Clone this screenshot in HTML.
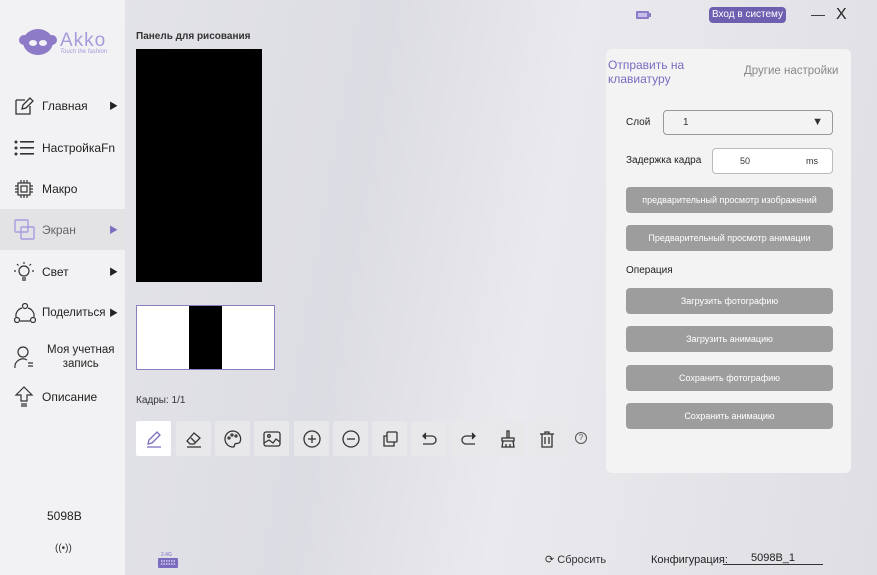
<!DOCTYPE html>
<html><head><meta charset="utf-8"><style>
*{margin:0;padding:0;box-sizing:border-box}
body{width:877px;height:575px;overflow:hidden;font-family:"Liberation Sans","Noto Sans CJK SC",sans-serif;position:relative;background:linear-gradient(100deg,#e6e6ec 0%,#dcdce3 40%,#e9e9ee 60%,#dedee4 100%);color:#333}
.side{position:absolute;left:0;top:0;width:125px;height:575px;background:#f2f2f4}
.nav{position:absolute;left:0;width:125px;height:41px;display:flex;align-items:center;font-size:12px;color:#222}
.nav svg{position:absolute;left:14px}
.nav .t{position:absolute;left:42px}
.nav .a{position:absolute;left:109px;font-size:9px}
.abs{position:absolute}
.tb{position:absolute;top:421px;width:35px;height:35px;background:#e8e8ea;border-radius:2px;display:flex;align-items:center;justify-content:center}
.panel{position:absolute;left:606px;top:49px;width:245px;height:424px;background:#f3f3f4;border-radius:6px}
.gb{position:absolute;left:20px;width:207px;height:26px;background:#9d9d9d;border-radius:4px;color:#fff;font-size:9px;display:flex;align-items:center;justify-content:center}
</style></head><body>
<div class="side">
 <svg class="abs" style="left:18px;top:28px" width="40" height="30" viewBox="0 0 40 30"><ellipse cx="20" cy="14" rx="15" ry="13" fill="#8d7bc7"/><circle cx="6" cy="12" r="5" fill="#8d7bc7"/><circle cx="34" cy="12" r="5" fill="#8d7bc7"/><ellipse cx="15" cy="15" rx="4" ry="3" fill="#f2f2f4"/><ellipse cx="25" cy="15" rx="4" ry="3" fill="#f2f2f4"/></svg>
 <div class="abs" style="left:60px;top:30px;font-size:19px;color:#a89adb;letter-spacing:1px">Akko</div>
 <div class="abs" style="left:60px;top:49px;font-size:6px;color:#a89adb;font-style:italic">Touch the fashion</div>
 <div class="nav" style="top:85px"><svg width="20" height="20" viewBox="0 0 20 20" fill="none" stroke="#333" stroke-width="1.3"><path d="M2 4h9M2 4v14h14v-8"/><path d="M8 13l1-4 7-7 3 3-7 7z"/></svg><span class="t">Главная</span><span class="a">▶</span></div>
 <div class="nav" style="top:127px"><svg width="20" height="16" viewBox="0 0 20 16" fill="#333"><circle cx="2" cy="2" r="1.5"/><circle cx="2" cy="8" r="1.5"/><circle cx="2" cy="14" r="1.5"/><rect x="6" y="1" width="14" height="1.6"/><rect x="6" y="7" width="14" height="1.6"/><rect x="6" y="13" width="14" height="1.6"/></svg><span class="t">НастройкаFn</span></div>
 <div class="nav" style="top:168px"><svg width="20" height="20" viewBox="0 0 20 20" fill="none" stroke="#333" stroke-width="1.2"><rect x="4" y="4" width="12" height="12"/><rect x="7" y="7" width="6" height="6"/><path d="M7 1v3M10 1v3M13 1v3M7 16v3M10 16v3M13 16v3M1 7h3M1 10h3M1 13h3M16 7h3M16 10h3M16 13h3"/></svg><span class="t">Макро</span></div>
 <div class="nav" style="top:209px;background:#e3e3e6"><svg width="22" height="22" viewBox="0 0 22 22" fill="none" stroke="#a99be0" stroke-width="1.4"><rect x="1" y="1" width="13" height="12" rx="1"/><rect x="7" y="8" width="13" height="12" rx="1"/></svg><span class="t" style="color:#666">Экран</span><span class="a" style="color:#7b6cc0">▶</span></div>
 <div class="nav" style="top:251px"><svg width="20" height="22" viewBox="0 0 20 22" fill="none" stroke="#333" stroke-width="1.2"><circle cx="10" cy="10" r="5"/><path d="M8 17h4M8 19h4M10 1v2M3 3l1.5 1.5M17 3l-1.5 1.5M0 10h2M18 10h2"/></svg><span class="t">Свет</span><span class="a">▶</span></div>
 <div class="nav" style="top:292px"><svg width="22" height="20" viewBox="0 0 22 20" fill="none" stroke="#333" stroke-width="1.2"><circle cx="11" cy="3" r="2.5"/><circle cx="3" cy="17" r="2.5"/><circle cx="19" cy="17" r="2.5"/><path d="M8 5A8 8 0 0 0 2 14M14 5a8 8 0 0 1 6 9M6 18h10"/></svg><span class="t" style="font-size:11.5px">Поделиться</span><span class="a">▶</span></div>
 <div class="nav" style="top:335px;height:44px"><svg width="20" height="24" viewBox="0 0 20 24" fill="none" stroke="#333" stroke-width="1.2"><circle cx="9" cy="7" r="5"/><path d="M1 23a8 8 0 0 1 12-8M14 18h5M14 21h5"/></svg><span class="t" style="left:47px;text-align:center;line-height:14px;font-size:11.5px">Моя учетная<br>запись</span></div>
 <div class="nav" style="top:376px"><svg width="20" height="22" viewBox="0 0 20 22" fill="none" stroke="#333" stroke-width="1.2"><path d="M10 1L2 9h5v6h6V9h5z"/><path d="M7 18h6M7 20h6"/></svg><span class="t">Описание</span></div>
 <div class="abs" style="left:47px;top:509px;font-size:12px;color:#222">5098B</div>
 <div class="abs" style="left:55px;top:543px;font-size:10px;color:#333">((•))</div>
</div>
<div class="abs" style="left:136px;top:31px;font-size:10px;font-weight:bold;color:#333">Панель для рисования</div>
<div class="abs" style="left:136px;top:49px;width:126px;height:233px;background:#000"></div>
<div class="abs" style="left:136px;top:305px;width:139px;height:65px;background:#fff;border:1px solid #8a7ec0"><div style="position:absolute;left:52px;top:0;width:33px;height:63px;background:#000"></div></div>
<div class="abs" style="left:136px;top:395px;font-size:10px;color:#333">Кадры: 1/1</div>
<div class="tb" style="left:136px;background:#fff"><svg width="20" height="20" viewBox="0 0 20 20" fill="none" stroke="#7b6cc0" stroke-width="1.3"><path d="M4 15l1-4 8-8 3 3-8 8zM3 18h14"/></svg></div>
<div class="tb" style="left:176px"><svg width="20" height="20" viewBox="0 0 20 20" fill="none" stroke="#333" stroke-width="1.3"><path d="M3 12l7-8 6 5-6 6H6zM7 9l5 5M3 18h14"/></svg></div>
<div class="tb" style="left:215px"><svg width="20" height="20" viewBox="0 0 20 20" fill="none" stroke="#333" stroke-width="1.3"><path d="M10 2a8 8 0 1 0 0 16c2 0 1-2 2-3s4 0 5-2A8 8 0 0 0 10 2z"/><circle cx="6" cy="9" r="1"/><circle cx="9" cy="6" r="1"/><circle cx="13" cy="7" r="1"/></svg></div>
<div class="tb" style="left:254px"><svg width="20" height="20" viewBox="0 0 20 20" fill="none" stroke="#333" stroke-width="1.3"><rect x="2" y="3" width="16" height="14" rx="2"/><circle cx="7" cy="7" r="1.3"/><path d="M2 14l5-3 4 3 3-4 4 3"/></svg></div>
<div class="tb" style="left:294px"><svg width="20" height="20" viewBox="0 0 20 20" fill="none" stroke="#333" stroke-width="1.3"><circle cx="10" cy="10" r="8"/><path d="M10 6v8M6 10h8"/></svg></div>
<div class="tb" style="left:333px"><svg width="20" height="20" viewBox="0 0 20 20" fill="none" stroke="#333" stroke-width="1.3"><circle cx="10" cy="10" r="8"/><path d="M6 10h8"/></svg></div>
<div class="tb" style="left:372px"><svg width="20" height="20" viewBox="0 0 20 20" fill="none" stroke="#333" stroke-width="1.3"><rect x="7" y="3" width="10" height="10" rx="1"/><path d="M7 7H4v10h10v-4"/></svg></div>
<div class="tb" style="left:411px"><svg width="20" height="20" viewBox="0 0 20 20" fill="none" stroke="#333" stroke-width="1.3"><path d="M5 7h8a4 4 0 0 1 0 8H4"/><path d="M7 4L4 7l3 3" fill="#333"/></svg></div>
<div class="tb" style="left:451px"><svg width="20" height="20" viewBox="0 0 20 20" fill="none" stroke="#333" stroke-width="1.3"><path d="M15 7H7a4 4 0 0 0 0 8h9"/><path d="M13 4l3 3-3 3" fill="#333"/></svg></div>
<div class="tb" style="left:490px"><svg width="20" height="20" viewBox="0 0 20 20" fill="none" stroke="#333" stroke-width="1.3"><path d="M9 2h2v7H9zM4 9h12v3H4zM5 12l-1 6h12l-1-6M8 15v3M12 15v3"/></svg></div>
<div class="tb" style="left:529px"><svg width="20" height="20" viewBox="0 0 20 20" fill="none" stroke="#333" stroke-width="1.3"><path d="M3 5h14M8 5V3h4v2M5 5v13h10V5M8 8v7M12 8v7"/></svg></div>
<div class="abs" style="left:575px;top:432px;width:12px;height:12px;border:1px solid #555;border-radius:50%;font-size:8px;text-align:center;line-height:10px;color:#555">?</div>
<svg class="abs" style="left:157px;top:551px" width="22" height="18" viewBox="0 0 22 18"><text x="4" y="5" font-size="5" fill="#7b6cc0" font-family="Liberation Sans">2.4G</text><rect x="1" y="7" width="20" height="10" rx="1" fill="#7b6cc0"/><path d="M4 10h14M4 13h14" stroke="#fff" stroke-dasharray="1.5 1" stroke-width="1"/></svg>
<div class="abs" style="left:545px;top:553px;font-size:11px;color:#333">⟳ Сбросить</div>
<div class="abs" style="left:651px;top:554px;font-size:11px;color:#222">Конфигурация:</div>
<div class="abs" style="left:723px;top:552px;width:100px;border-bottom:1px solid #333;font-size:11px;color:#222;text-align:center">5098B_1</div>
<svg class="abs" style="left:636px;top:10px" width="16" height="10"><rect x="0" y="1" width="13" height="8" rx="1" fill="#8d7bc7"/><rect x="13" y="3" width="2" height="4" fill="#8d7bc7"/><rect x="2" y="3" width="9" height="4" fill="#c8bfea"/></svg>
<div class="abs" style="left:709px;top:7px;width:77px;height:16px;background:#6e5fb0;border-radius:4px;color:#fff;font-size:10px;text-align:center;line-height:16px">Вход в систему</div>
<div class="abs" style="left:811px;top:6px;font-size:14px;color:#333">—</div>
<div class="abs" style="left:836px;top:6px;font-size:16px;color:#222">X</div>
<div class="panel">
 <div class="abs" style="left:2px;top:9px;font-size:12px;color:#7b6cc0;line-height:14px">Отправить на<br>клавиатуру</div>
 <div class="abs" style="left:138px;top:16px;font-size:11.5px;color:#888">Другие настройки</div>
 <div class="abs" style="left:20px;top:68px;font-size:10px;color:#222">Слой</div>
 <div class="abs" style="left:57px;top:61px;width:170px;height:25px;border:1px solid #999;border-radius:4px;background:#f3f3f4;font-size:10px;padding:6px 0 0 19px">1<span style="position:absolute;right:9px;top:5px;font-size:11px">▼</span></div>
 <div class="abs" style="left:20px;top:106px;font-size:10px;color:#222">Задержка кадра</div>
 <div class="abs" style="left:106px;top:99px;width:121px;height:26px;border:1px solid #bbb;border-radius:4px;background:#fff;font-size:9px;padding-top:7px"><span style="position:absolute;left:27px">50</span><span style="position:absolute;left:93px">ms</span></div>
 <div class="gb" style="top:138px">предварительный просмотр изображений</div>
 <div class="gb" style="top:176px">Предварительный просмотр анимации</div>
 <div class="abs" style="left:20px;top:216px;font-size:10px;color:#222">Операция</div>
 <div class="gb" style="top:239px">Загрузить фотографию</div>
 <div class="gb" style="top:277px">Загрузить анимацию</div>
 <div class="gb" style="top:316px">Сохранить фотографию</div>
 <div class="gb" style="top:354px">Сохранить анимацию</div>
</div>
</body></html>
